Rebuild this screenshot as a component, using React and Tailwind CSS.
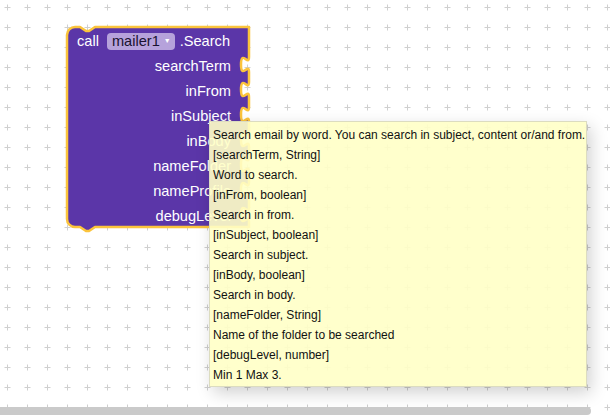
import React from "react";

const rows = ["searchTerm", "inFrom", "inSubject", "inBody", "nameFolder", "nameProfile", "debugLevel"];

const tipLines = [
  "Search email by word. You can search in subject, content or/and from.",
  "[searchTerm, String]",
  "Word to search.",
  "[inFrom, boolean]",
  "Search in from.",
  "[inSubject, boolean]",
  "Search in subject.",
  "[inBody, boolean]",
  "Search in body.",
  "[nameFolder, String]",
  "Name of the folder to be searched",
  "[debugLevel, number]",
  "Min 1 Max 3.",
];

// block outline: top notch, one puzzle socket per input row, bottom notch
function blockPath() {
  const left = 67;
  const right = 249;
  const top = 27;
  const firstRow = 52;
  let d = `M ${left},${top + 8} A 8,8 0 0 1 ${left + 8},${top} H 80 l 6,4 3,0 6,-4 H ${right} V ${firstRow}`;
  rows.forEach(() => {
    d += " v 5 c 0,10 -8,-8 -8,7.5 s 8,-2.5 8,7.5 v 5";
  });
  const bottom = firstRow + rows.length * 25;
  d += ` V ${bottom} H 95 l -6,4 -3,0 -6,-4 H ${left + 8} A 8,8 0 0 1 ${left},${bottom - 8} Z`;
  return d;
}

function Grid() {
  return (
    <svg className="absolute inset-0" width="610" height="415">
      <defs>
        <pattern id="grid" width="20" height="20" patternUnits="userSpaceOnUse">
          <line x1="4.5" y1="7.5" x2="10.5" y2="7.5" stroke="#cfcfcf" strokeWidth="1" />
          <line x1="7.5" y1="4.5" x2="7.5" y2="10.5" stroke="#cfcfcf" strokeWidth="1" />
        </pattern>
      </defs>
      <rect width="610" height="415" fill="url(#grid)" />
    </svg>
  );
}

function Block() {
  return (
    <>
      <svg className="absolute inset-0" width="610" height="415">
        <path d={blockPath()} fill="#5b36a8" stroke="#fbc43c" strokeWidth="2.5" strokeLinejoin="round" />
      </svg>
      <div className="absolute left-[67px] top-[29px] w-[182px] flex flex-col text-[14.6px] text-white font-['Liberation_Sans',Arial,sans-serif]">
        <div className="h-[25px] flex items-center pl-[10px]">
          <span>call</span>
          <span className="ml-[8px] h-[17px] pl-[5px] pr-[4px] flex items-center gap-[4px] rounded-[4px] bg-[#b6a2db] text-[#1a1230]">
            mailer1
            <span className="text-[7px] text-white">▼</span>
          </span>
          <span className="ml-[5px]">.Search</span>
        </div>
        {rows.map((r) => (
          <div key={r} className="h-[25px] flex items-center justify-end pr-[18px]">
            {r}
          </div>
        ))}
      </div>
    </>
  );
}

function Tooltip() {
  return (
    <div className="absolute left-[209px] top-[121px] w-[378px] h-[266px] border border-[#dcdcc0] bg-[#ffffc7]/90 shadow-[4px_6px_16px_rgba(0,0,0,0.18)] px-[3px] pt-[3px] text-[12px] leading-[20px] text-[#111] font-['Liberation_Sans',Arial,sans-serif] whitespace-nowrap">
      {tipLines.map((l, i) => (
        <div key={i}>{l}</div>
      ))}
    </div>
  );
}

export default function App() {
  return (
    <div className="relative w-[610px] h-[415px] overflow-hidden bg-white">
      <Grid />
      <Block />
      <Tooltip />
      <div className="absolute left-0 top-[407px] h-[8px] w-[591px] rounded-r-[4px] bg-[#cacaca]" />
    </div>
  );
}
